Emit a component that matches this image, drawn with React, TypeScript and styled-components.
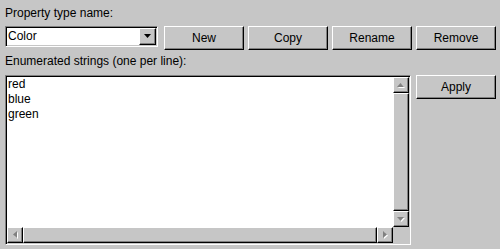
import styled, { createGlobalStyle, css } from "styled-components";

const GlobalStyle = createGlobalStyle`
  html, body {
    margin: 0;
    padding: 0;
    background: #c6c6c6;
  }
  body {
    font-family: "Liberation Sans", Arial, sans-serif;
    font-size: 12px;
    color: #000;
  }
  * {
    box-sizing: border-box;
  }
`;

const raised = css`
  border: 1px solid;
  border-color: #fff #000 #000 #fff;
  box-shadow: inset -1px -1px 0 #808080;
  background: #c6c6c6;
`;

const sunken = css`
  border: 1px solid;
  border-color: #808080 #fff #fff #808080;
  box-shadow: inset 1px 1px 0 #000;
  background: #c6c6c6;
  padding: 1px;
`;

type Dir = "up" | "down" | "left" | "right";

const arrowPoints: Record<Dir, string> = {
  up: "4,0 0,4 7,4 3,0",
  down: "0,0 7,0 3.5,4",
  left: "0,3.5 4,0 4,7",
  right: "0,0 4,3.5 0,7",
};

function Arrow({ dir, disabled }: { dir: Dir; disabled?: boolean }) {
  const horizontal = dir === "left" || dir === "right";
  const w = horizontal ? 4 : 7;
  const h = horizontal ? 7 : 4;
  const pts =
    dir === "up" ? "3.5,0 0,4 7,4" : arrowPoints[dir];
  return (
    <svg width={w + 1} height={h + 1} viewBox={`0 0 ${w + 1} ${h + 1}`}>
      {disabled && (
        <polygon points={pts} fill="#fff" transform="translate(1,1)" />
      )}
      <polygon points={pts} fill={disabled ? "#808080" : "#000"} />
    </svg>
  );
}

export default function App() {
  return (
    <>
      <GlobalStyle />
      <Page>
        <Label>Property type name:</Label>
        <TopRow>
          <Combo>
            <ComboText>Color</ComboText>
            <ComboButton>
              <Arrow dir="down" />
            </ComboButton>
          </Combo>
          <ButtonGroup>
            <Button>New</Button>
            <Button>Copy</Button>
            <Button>Rename</Button>
            <Button>Remove</Button>
          </ButtonGroup>
        </TopRow>
        <Label $gap={4}>Enumerated strings (one per line):</Label>
        <MainRow>
          <TextBox>
            <Editor>
              <div>red</div>
              <div>blue</div>
              <div>green</div>
            </Editor>
            <VScroll>
              <ScrollButton>
                <Arrow dir="up" disabled />
              </ScrollButton>
              <Thumb />
              <ScrollButton>
                <Arrow dir="down" disabled />
              </ScrollButton>
            </VScroll>
            <HScroll>
              <ScrollButton>
                <Arrow dir="left" disabled />
              </ScrollButton>
              <Thumb />
              <ScrollButton>
                <Arrow dir="right" disabled />
              </ScrollButton>
            </HScroll>
            <Corner />
          </TextBox>
          <Button>Apply</Button>
        </MainRow>
      </Page>
    </>
  );
}

const Page = styled.div`
  width: 500px;
  height: 249px;
  padding: 6px 4px 0 5px;
  display: flex;
  flex-direction: column;
  overflow: hidden;
`;

const Label = styled.div<{ $gap?: number }>`
  height: 14px;
  line-height: 14px;
  margin-top: ${(p) => p.$gap ?? 0}px;
  white-space: nowrap;
`;

const TopRow = styled.div`
  display: flex;
  align-items: flex-start;
  margin-top: 6px;
`;

const Combo = styled.div`
  ${sunken};
  width: 153px;
  height: 21px;
  margin-right: 6px;
  display: flex;
`;

const ComboText = styled.div`
  flex: 1;
  background: #fff;
  line-height: 17px;
  padding-left: 1px;
`;

const ComboButton = styled.div`
  ${raised};
  width: 17px;
  height: 17px;
  display: flex;
  align-items: center;
  justify-content: center;
  padding-left: 1px;
`;

const ButtonGroup = styled.div`
  display: flex;
  gap: 4px;
`;

const Button = styled.button`
  ${raised};
  width: 80px;
  height: 24px;
  padding: 0;
  font: inherit;
  color: #000;
  flex: none;
`;

const MainRow = styled.div`
  display: flex;
  align-items: flex-start;
  gap: 5px;
  margin-top: 7px;
`;

const TextBox = styled.div`
  ${sunken};
  width: 406px;
  height: 170px;
  display: grid;
  grid-template-columns: 1fr 16px;
  grid-template-rows: 1fr 16px;
`;

const Editor = styled.div`
  background: #fff;
  line-height: 15px;
  padding-left: 1px;
  white-space: pre;
`;

const VScroll = styled.div`
  display: flex;
  flex-direction: column;
`;

const HScroll = styled.div`
  display: flex;
`;

const ScrollButton = styled.div`
  ${raised};
  width: 16px;
  height: 16px;
  flex: none;
  display: flex;
  align-items: center;
  justify-content: center;
`;

const Thumb = styled.div`
  ${raised};
  flex: 1;
`;

const Corner = styled.div`
  background: #c6c6c6;
`;
